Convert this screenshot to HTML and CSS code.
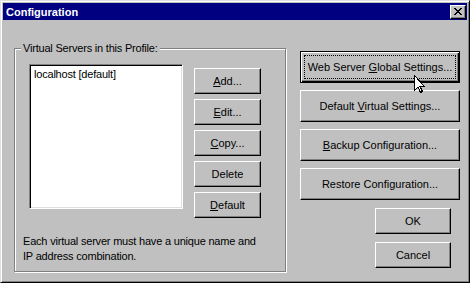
FILE: index.html
```html
<!DOCTYPE html>
<html lang="en">
<head>
    <meta charset="UTF-8">
    <title>Configuration</title>
    <link rel="stylesheet" href="styles.css">
</head>
<body>
    <div class="window">
        <div class="titlebar">
            <span class="title">Configuration</span>
            <button class="close-btn" aria-label="Close">
                <svg width="8" height="7" viewBox="0 0 8 7" shape-rendering="crispEdges">
                    <path fill="#000" d="M0 0h2v1H0zM6 0h2v1H6zM1 1h2v1H1zM5 1h2v1H5zM2 2h4v1H2zM3 3h2v1H3zM2 4h4v1H2zM1 5h2v1H1zM5 5h2v1H5zM0 6h2v1H0zM6 6h2v1H6z"/>
                </svg>
            </button>
        </div>

        <div class="dialog">
            <fieldset class="group">
                <legend>Virtual Servers in this Profile:</legend>
                <div class="servers">
                    <div class="listbox">
                        <div class="list-item">localhost [default]</div>
                    </div>
                    <div class="side-buttons">
                        <button class="btn small"><u>A</u>dd...</button>
                        <button class="btn small"><u>E</u>dit...</button>
                        <button class="btn small"><u>C</u>opy...</button>
                        <button class="btn small">Delete</button>
                        <button class="btn small"><u>D</u>efault</button>
                    </div>
                </div>
                <p class="note">Each virtual server must have a unique name and<br>IP address combination.</p>
            </fieldset>

            <div class="actions">
                <button class="btn wide default">Web Server <u>G</u>lobal Settings...</button>
                <button class="btn wide">Default <u>V</u>irtual Settings...</button>
                <button class="btn wide"><u>B</u>ackup Configuration...</button>
                <button class="btn wide">Restore Configuration...</button>
                <button class="btn ok">OK</button>
                <button class="btn ok">Cancel</button>
            </div>
        </div>

        <!-- mouse pointer over the default button -->
        <svg class="cursor" width="12" height="19" viewBox="0 0 12 19" shape-rendering="crispEdges">
            <path fill="#fff" stroke="#000" d="M0.5 0.5V15.5L4 12L6.5 17.5L8.5 16.5L6 11.5H10.5Z"/>
        </svg>
    </div>
</body>
</html>
```

FILE: styles.css
```css
body {
    margin: 0;
    background: #c0c0c0;
    font-family: "Liberation Sans", Arial, sans-serif;
    font-size: 11px;
    letter-spacing: -0.2px;
    color: #000;
}

.window {
    position: relative;
    width: 470px;
    height: 283px;
    box-sizing: border-box;
    padding: 2px;
    display: flex;
    flex-direction: column;
    background: #c0c0c0;
    border: 1px solid;
    border-color: #dfdfdf #000 #000 #dfdfdf;
    box-shadow: inset 1px 1px 0 #fff, inset -1px -1px 0 #808080;
}

.titlebar {
    height: 17px;
    display: flex;
    align-items: center;
    justify-content: space-between;
    padding: 0 1px 0 3px;
    background: #000080;
    color: #fff;
}

.title {
    font-weight: bold;
    letter-spacing: 0;
}

.close-btn {
    width: 16px;
    height: 14px;
    padding: 0;
    display: flex;
    align-items: center;
    justify-content: center;
    background: #c0c0c0;
    border: 1px solid;
    border-color: #fff #000 #000 #fff;
    box-shadow: inset -1px -1px 0 #808080;
}

.dialog {
    flex: 1;
    display: flex;
    padding: 22px 7px 8px 11px;
}

.group {
    width: 272px;
    box-sizing: border-box;
    margin: 0;
    padding: 0 8px;
    min-width: 0;
    border: 1px solid #808080;
    box-shadow: inset 1px 1px 0 #fff, 1px 1px 0 #fff;
}

.group legend {
    padding: 0 2px;
    margin-left: -2px;
    line-height: 13px;
    background: #c0c0c0;
}

.servers {
    display: flex;
    align-items: flex-start;
    gap: 11px;
    margin-top: 9px;
    padding-left: 6px;
}

.listbox {
    width: 154px;
    height: 145px;
    box-sizing: border-box;
    padding: 3px 4px;
    background: #fff;
    border: 1px solid;
    border-color: #808080 #fff #fff #808080;
    box-shadow: inset 1px 1px 0 #000, inset -1px -1px 0 #dfdfdf;
}

.side-buttons {
    display: flex;
    flex-direction: column;
    gap: 5px;
    margin-top: 4px;
}

.note {
    margin: 16px 0 0;
    line-height: 15px;
    white-space: nowrap;
}

.btn {
    box-sizing: border-box;
    padding: 0;
    font: inherit;
    color: #000;
    background: #c0c0c0;
    border: 1px solid;
    border-color: #fff #000 #000 #fff;
    box-shadow: inset -1px -1px 0 #808080;
}

.btn.small {
    width: 67px;
    height: 26px;
}

.actions {
    display: flex;
    flex-direction: column;
    gap: 7px;
    margin: 9px 0 0 14px;
}

.btn.wide {
    width: 160px;
    height: 32px;
}

.btn.default {
    border-color: #000;
    box-shadow: inset 1px 1px 0 #fff, inset -1px -1px 0 #000, inset -2px -2px 0 #808080;
    outline: 1px dotted #000;
    outline-offset: -5px;
}

.btn.ok {
    width: 76px;
    height: 26px;
    align-self: flex-end;
    margin: 1px 9px 0 0;
}

.cursor {
    position: absolute;
    left: 413px;
    top: 74px;
}
```
